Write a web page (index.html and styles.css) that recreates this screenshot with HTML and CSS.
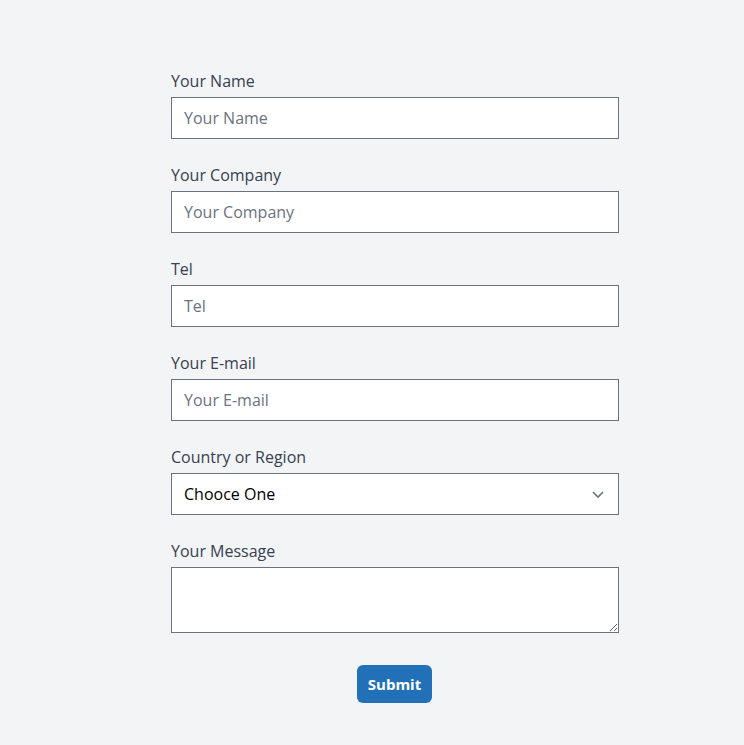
FILE: index.html
```html
<!DOCTYPE html>
<html lang="en">
<head>
    <meta charset="UTF-8">
    <meta name="viewport" content="width=device-width, initial-scale=1.0">
    <title>Contact</title>
    <link rel="stylesheet" href="styles.css">
</head>
<body>
    <form class="contact-form">
        <div class="field">
            <label for="your_name">Your Name</label>
            <input type="text" id="your_name" name="your_name" placeholder="Your Name">
        </div>
        <div class="field">
            <label for="your_company">Your Company</label>
            <input type="text" id="your_company" name="your_company" placeholder="Your Company">
        </div>
        <div class="field">
            <label for="tel">Tel</label>
            <input type="text" id="tel" name="tel" placeholder="Tel">
        </div>
        <div class="field">
            <label for="email">Your E-mail</label>
            <input type="email" id="email" name="email" placeholder="Your E-mail">
        </div>
        <div class="field">
            <label for="country">Country or Region</label>
            <div class="select-wrap">
                <select id="country" name="country">
                    <option>Chooce One</option>
                </select>
                <svg class="chevron" width="14" height="14" viewBox="0 0 14 14">
                    <path d="M2 5l5 5 5-5" fill="none" stroke="#6b7280" stroke-width="1.6"/>
                </svg>
            </div>
        </div>
        <div class="field">
            <label for="message">Your Message</label>
            <textarea id="message" name="message"></textarea>
        </div>
        <div class="btn-container">
            <button type="submit">Submit</button>
        </div>
    </form>
</body>
</html>
```

FILE: styles.css
```css
body {
    font-family: "Open Sans", "Noto Sans", sans-serif;
    background-color: #f3f4f6;
    color: #374151;
    margin: 0;
    padding: 0;
}

.contact-form {
    width: 448px;
    margin: 0 0 0 171px;
    padding: 69px 0 0 0;
}

.field {
    margin-bottom: 24px;
}

.field label {
    display: block;
    font-size: 16px;
    line-height: 24px;
    margin-bottom: 4px;
}

.field input,
.field select,
.field textarea {
    display: block;
    width: 100%;
    height: 42px;
    padding: 0 12px;
    font-family: inherit;
    font-size: 16px;
    color: #000;
    background-color: #fff;
    border: 1px solid #6b7280;
    border-radius: 0;
    box-sizing: border-box;
    outline: none;
}

.field input::placeholder {
    color: #6b7280;
}

.select-wrap {
    position: relative;
}

.field select {
    appearance: none;
    -webkit-appearance: none;
}

.chevron {
    position: absolute;
    right: 14px;
    top: 14px;
    pointer-events: none;
}

.field textarea {
    height: 66px;
    padding: 8px 12px;
    resize: vertical;
}

.btn-container {
    display: flex;
    justify-content: center;
    padding: 8px 1px 0 0;
}

button {
    background-color: #2271b8;
    color: #fff;
    width: 75px;
    height: 38px;
    padding: 0;
    border: none;
    border-radius: 6px;
    font-family: inherit;
    font-size: 15px;
    font-weight: 700;
    cursor: pointer;
}
```
